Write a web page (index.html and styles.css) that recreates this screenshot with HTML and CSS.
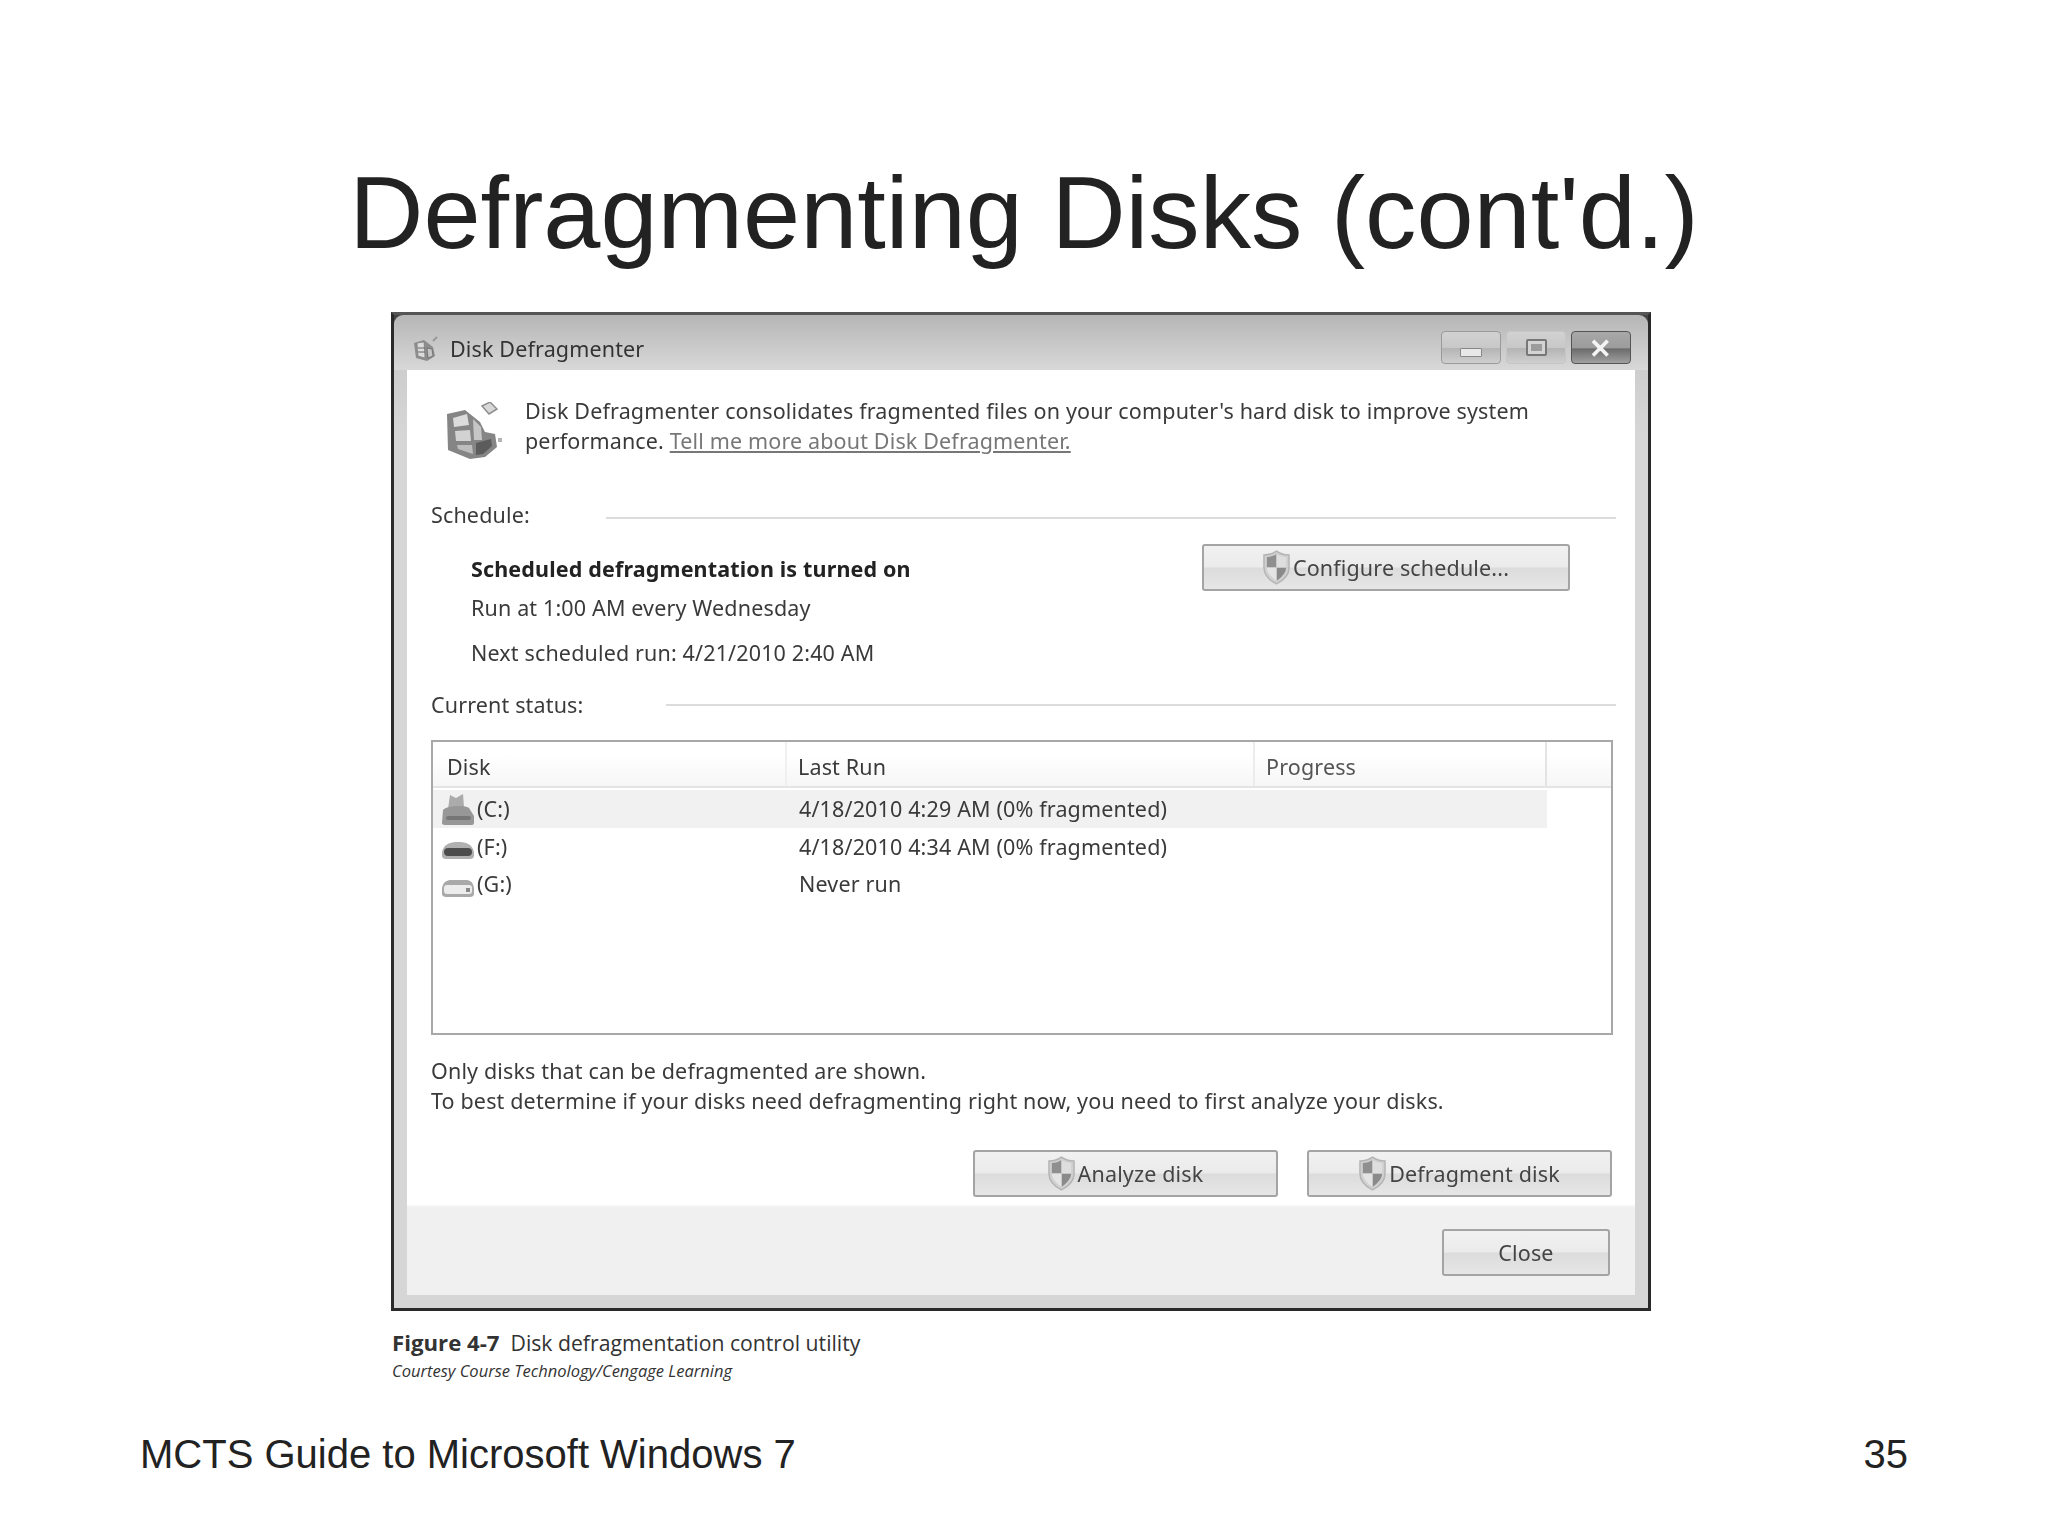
FILE: index.html
```html
<!DOCTYPE html>
<html lang="en">
<head>
  <meta charset="UTF-8">
  <title>Defragmenting Disks (cont'd.)</title>
  <link rel="stylesheet" href="styles.css">
</head>
<body>
  <svg class="defs" width="0" height="0">
    <symbol id="shield" viewBox="0 0 28 36">
      <path d="M14 1 C10 4 6 5 1 5 L1 18 C1 26 8 32 14 35 C20 32 27 26 27 18 L27 5 C22 5 18 4 14 1 Z" fill="#d0d0d0" stroke="#b4b4b4" stroke-width="1.5"/>
      <path d="M14 4 C11 6 8 7 4 7 L4 18 L14 18 Z" fill="#8f8f8f"/>
      <path d="M14 18 L24 18 C24 24 18 29 14 32 Z" fill="#8a8a8a"/>
      <path d="M14 4 C17 6 20 7 24 7 L24 18 L14 18 Z" fill="#dedede"/>
      <path d="M14 18 L4 18 C4 24 10 29 14 32 Z" fill="#e4e4e4"/>
    </symbol>
    <symbol id="defrag" viewBox="0 0 58 58">
      <path d="M37 4 L45 0 L52 7 L44 12 Z" fill="#d8d8d8" stroke="#8f8f8f" stroke-width="1.5"/>
      <path d="M2 12 L20 8 L35 20 L40 30 L50 32 L52 45 L40 55 L25 57 L3 48 Z" fill="#858585"/>
      <path d="M8 16 L22 12 L24 23 L9 25 Z" fill="#dcdcdc"/>
      <path d="M10 29 L25 28 L26 39 L11 39 Z" fill="#d2d2d2"/>
      <path d="M12 43 L27 43 L28 52 L13 47 Z" fill="#bdbdbd"/>
      <path d="M28 17 L36 25 L37 38 L29 38 Z" fill="#c6c6c6"/>
      <path d="M31 41 L46 37 L47 44 L38 52 L31 53 Z" fill="#5c5c5c"/>
      <rect x="53" y="36" width="4" height="4" fill="#b4b4b4"/>
    </symbol>
    <symbol id="disk-c" viewBox="0 0 32 32">
      <path d="M6 16 L8 2 L14 5 L21 1 L22 14 L27 16 Z" fill="#ababab"/>
      <path d="M1 17 C5 12 24 12 27 15 L32 23 L32 30 C32 31 31 32 30 32 L3 32 C1 32 0 31 0 30 Z" fill="#979797"/>
      <rect x="4" y="23" width="25" height="4" rx="2" fill="#767676"/>
    </symbol>
    <symbol id="disk-f" viewBox="0 0 32 18">
      <path d="M0 11 C2 3 8 1 16 1 C24 1 30 3 32 11 L32 15 C32 17 30 18 28 18 L4 18 C2 18 0 17 0 15 Z" fill="#b0b0b0"/>
      <rect x="2" y="7" width="28" height="8" rx="4" fill="#4c4c4c"/>
    </symbol>
    <symbol id="disk-g" viewBox="0 0 32 18">
      <path d="M0 9 C1 3 5 1 9 1 L24 1 C28 1 31 3 32 9 L32 15 C32 17 30 18 28 18 L4 18 C2 18 0 17 0 15 Z" fill="#a9a9a9"/>
      <rect x="2" y="6" width="28" height="9" rx="3" fill="#ececec"/>
      <rect x="24" y="9" width="4" height="4" fill="#888"/>
    </symbol>
    <symbol id="app" viewBox="0 0 26 26">
      <path d="M1 7 L11 4 L20 11 L22 20 L14 25 L3 22 Z" fill="#8d8d8d"/>
      <path d="M4 7 L11 6 L12 22 L5 20 Z" fill="#dcdcdc" stroke="#777" stroke-width=".6"/>
      <path d="M5 12 L12 12 M5 16 L12 16" stroke="#666"/>
      <path d="M14 12 L19 13 L20 20 L15 22 Z" fill="#c4c4c4" stroke="#555" stroke-width=".6"/>
      <path d="M20 5 L24 1" stroke="#999" stroke-width="2"/>
    </symbol>
  </svg>

  <div class="slide">
    <h1 class="slide-title">Defragmenting Disks (cont'd.)</h1>

    <div class="window">
      <div class="titlebar">
        <svg class="app-icon"><use href="#app"/></svg>
        <span class="window-title">Disk Defragmenter</span>
        <div class="caption-buttons">
          <div class="cap-btn"><span class="glyph-min"></span></div>
          <div class="cap-btn cap-max"><span class="glyph-max"></span></div>
          <div class="cap-btn cap-close"><span class="glyph-close">✕</span></div>
        </div>
      </div>

      <div class="dialog">
        <div class="intro">
          <svg class="intro-icon"><use href="#defrag"/></svg>
          <p class="intro-text">Disk Defragmenter consolidates fragmented files on your computer's hard disk to improve system<br>performance. <a class="link">Tell me more about Disk Defragmenter.</a></p>
        </div>

        <div class="group-head head-schedule">
          <span class="group-label label-schedule">Schedule:</span>
          <span class="group-line"></span>
        </div>

        <div class="schedule">
          <div class="schedule-info">
            <div class="line line-bold">Scheduled defragmentation is turned on</div>
            <div class="line line-run">Run at 1:00 AM every Wednesday</div>
            <div class="line line-next">Next scheduled run: 4/21/2010 2:40 AM</div>
          </div>
          <div class="btn btn-configure"><svg class="shield"><use href="#shield"/></svg>Configure schedule...</div>
        </div>

        <div class="group-head head-status">
          <span class="group-label label-status">Current status:</span>
          <span class="group-line"></span>
        </div>

        <div class="disk-list">
          <div class="list-head">
            <div class="col col-disk">Disk</div>
            <div class="col col-run">Last Run</div>
            <div class="col col-progress">Progress</div>
          </div>
          <div class="list-row row-selected">
            <div class="cell cell-disk"><svg class="disk-icon icon-c"><use href="#disk-c"/></svg>(C:)</div>
            <div class="cell cell-run">4/18/2010 4:29 AM (0% fragmented)</div>
          </div>
          <div class="list-row">
            <div class="cell cell-disk"><svg class="disk-icon"><use href="#disk-f"/></svg>(F:)</div>
            <div class="cell cell-run">4/18/2010 4:34 AM (0% fragmented)</div>
          </div>
          <div class="list-row">
            <div class="cell cell-disk"><svg class="disk-icon"><use href="#disk-g"/></svg>(G:)</div>
            <div class="cell cell-run">Never run</div>
          </div>
        </div>

        <p class="note">Only disks that can be defragmented are shown.<br>To best determine if your disks need defragmenting right now, you need to first analyze your disks.</p>

        <div class="actions">
          <div class="btn btn-action"><svg class="shield"><use href="#shield"/></svg>Analyze disk</div>
          <div class="btn btn-action"><svg class="shield"><use href="#shield"/></svg>Defragment disk</div>
        </div>
      </div>

      <div class="dialog-foot">
        <div class="btn btn-close">Close</div>
      </div>
    </div>

    <div class="figure-caption">
      <div class="figure-title"><b>Figure 4-7</b>&nbsp; Disk defragmentation control utility</div>
      <div class="figure-credit">Courtesy Course Technology/Cengage Learning</div>
    </div>

    <div class="slide-foot">
      <span>MCTS Guide to Microsoft Windows 7</span>
      <span>35</span>
    </div>
  </div>
</body>
</html>
```

FILE: styles.css
```css
* {
  box-sizing: border-box;
}
html, body {
  margin: 0;
  background: #fff;
}
.defs {
  display: block;
  height: 0;
}
.slide {
  width: 2048px;
  height: 1536px;
  overflow: hidden;
  font-family: "Liberation Sans", Arial, sans-serif;
  color: #222;
}
.slide-title {
  margin: 0;
  padding-top: 150px;
  height: 312px;
  line-height: 126px;
  font-size: 102.7px;
  font-weight: 400;
  text-align: center;
  color: #222;
}

/* window */
.window {
  width: 1260px;
  height: 999px;
  margin-left: 391px;
  border: 3px solid #2a2a2a;
  border-top-color: #555;
  background: linear-gradient(#444 0, #444 10px, #c8c8c8 10px, #d6d6d6 12%);
  font-family: "Noto Sans", "Open Sans", sans-serif;
  font-size: 21.5px;
  letter-spacing: 0.15px;
  color: #3a3a3a;
  filter: blur(0.45px);
}
.titlebar {
  height: 55px;
  display: flex;
  align-items: center;
  padding: 12px 17px 0 19px;
  border-radius: 9px 9px 0 0;
  background: linear-gradient(#b6b6b6, #d8d8d8);
}
.app-icon {
  width: 26px;
  height: 26px;
  margin-right: 11px;
}
.window-title {
  flex: 1;
  font-size: 21.5px;
  color: #333;
}
.caption-buttons {
  display: flex;
  gap: 5px;
  margin-top: -2px;
}
.cap-btn {
  width: 60px;
  height: 33px;
  display: flex;
  align-items: center;
  justify-content: center;
  border: 1.5px solid #9a9a9a;
  border-radius: 4px;
  background: linear-gradient(#d2d2d2 0, #c8c8c8 50%, #b4b4b4 52%, #cfcfcf 100%);
}
.cap-max {
  border-color: #c6c6c6;
}
.cap-close {
  border-color: #555;
  background: linear-gradient(#a8a8a8 0, #9c9c9c 50%, #6c6c6c 55%, #a0a0a0 100%);
}
.glyph-min {
  width: 22px;
  height: 9px;
  margin-top: 9px;
  background: #e8e8e8;
  border: 1.5px solid #888;
  border-radius: 1px;
}
.glyph-max {
  width: 21px;
  height: 17px;
  border: 2px solid #777;
  border-radius: 2px;
  background: #d4d4d4;
  box-shadow: inset 0 0 0 3px #d4d4d4, inset 0 0 0 8px #9c9c9c;
}
.glyph-close {
  font-size: 27px;
  line-height: 1;
  font-weight: 700;
  color: #f4f4f4;
}

/* dialog body */
.dialog {
  height: 835px;
  margin: 0 13px;
  padding-left: 24px;
  background: #fff;
}
.intro {
  display: flex;
  padding-top: 26px;
}
.intro-icon {
  width: 58px;
  height: 58px;
  margin: 6px 22px 0 14px;
  flex: none;
}
.intro-text {
  margin: 0;
  line-height: 30px;
  white-space: nowrap;
}
.link {
  color: #777;
  text-decoration: underline;
}
.group-head {
  display: flex;
  align-items: center;
  height: 30px;
  padding-right: 19px;
}
.head-schedule {
  margin-top: 39px;
}
.head-schedule .group-line {
  margin-top: 7px;
}
.head-status .group-line {
  margin-top: 2px;
}
.group-label {
  flex: none;
}
.label-schedule {
  width: 175px;
}
.label-status {
  width: 235px;
}
.group-line {
  flex: 1;
  height: 2px;
  background: #dcdcdc;
}
.schedule {
  display: flex;
  justify-content: space-between;
  padding: 0 65px 0 40px;
  height: 160px;
}
.schedule-info {
  padding-top: 25px;
}
.line {
  height: 30px;
  line-height: 30px;
  white-space: nowrap;
}
.line-bold {
  font-weight: 700;
  color: #222;
}
.line-run {
  margin-top: 9px;
}
.line-next {
  margin-top: 15px;
}
.btn {
  display: flex;
  align-items: center;
  justify-content: center;
  height: 47px;
  border: 2px solid #a4a4a4;
  border-radius: 3px;
  background: linear-gradient(#f1f1f1 0, #ebebeb 48%, #dcdcdc 52%, #e6e6e6 100%);
  color: #444;
  white-space: nowrap;
}
.btn-configure {
  width: 368px;
  margin-top: 15px;
}
.shield {
  width: 27px;
  height: 35px;
  margin-right: 3px;
  flex: none;
}

/* disk list */
.disk-list {
  width: 1182px;
  height: 295px;
  margin-top: 21px;
  border: 2px solid #a8a8a8;
}
.list-head {
  display: grid;
  grid-template-columns: 354px 468px 292px 1fr;
  height: 46px;
  border-bottom: 2px solid #e4e4e4;
  background: linear-gradient(#fff 30%, #f6f6f6);
}
.col {
  height: 44px;
  line-height: 50px;
  padding-left: 11px;
  border-right: 2px solid #f0f0f0;
}
.col-disk {
  padding-left: 14px;
}
.col-progress {
  color: #555;
  border-right-color: #e4e4e4;
}
.col + .col-run {
  border-right-color: #ececec;
}
.list-row {
  display: grid;
  grid-template-columns: 354px 468px 292px;
  height: 37.5px;
  line-height: 37px;
}
.list-head + .list-row {
  margin-top: 2px;
}
.row-selected {
  width: 1114px;
  background: #f1f1f1;
}
.cell {
  white-space: nowrap;
}
.cell-disk {
  display: flex;
  align-items: center;
  padding-left: 9px;
}
.cell-run {
  padding-left: 12px;
}
.disk-icon {
  width: 32px;
  height: 18px;
  margin: 8px 3px 0 0;
  flex: none;
}
.icon-c {
  height: 32px;
  margin-top: 0;
}
.note {
  margin: 21px 0 0;
  line-height: 30px;
  white-space: nowrap;
}
.actions {
  display: flex;
  justify-content: flex-end;
  gap: 29px;
  margin-top: 34px;
  padding-right: 23px;
}
.btn-action {
  width: 305px;
}
.dialog-foot {
  height: 90px;
  margin: 0 13px;
  padding: 22px 25px 0 0;
  display: flex;
  justify-content: flex-end;
  align-items: flex-start;
  background: #f0f0f0;
  border-top: 2px solid #f6f6f6;
}
.btn-close {
  width: 168px;
}

/* caption and footer */
.figure-caption {
  margin: 17px 0 0 392px;
  font-family: "Open Sans", "Noto Sans", sans-serif;
  color: #333;
}
.figure-title {
  height: 30px;
  line-height: 30px;
  font-size: 21.2px;
}
.figure-title b {
  font-size: 22.2px;
}
.figure-credit {
  height: 26px;
  line-height: 26px;
  font-size: 16.5px;
  font-style: italic;
}
.slide-foot {
  display: flex;
  justify-content: space-between;
  margin-top: 45px;
  padding: 0 140px;
  height: 50px;
  line-height: 50px;
  font-size: 40px;
  color: #222;
}
```
